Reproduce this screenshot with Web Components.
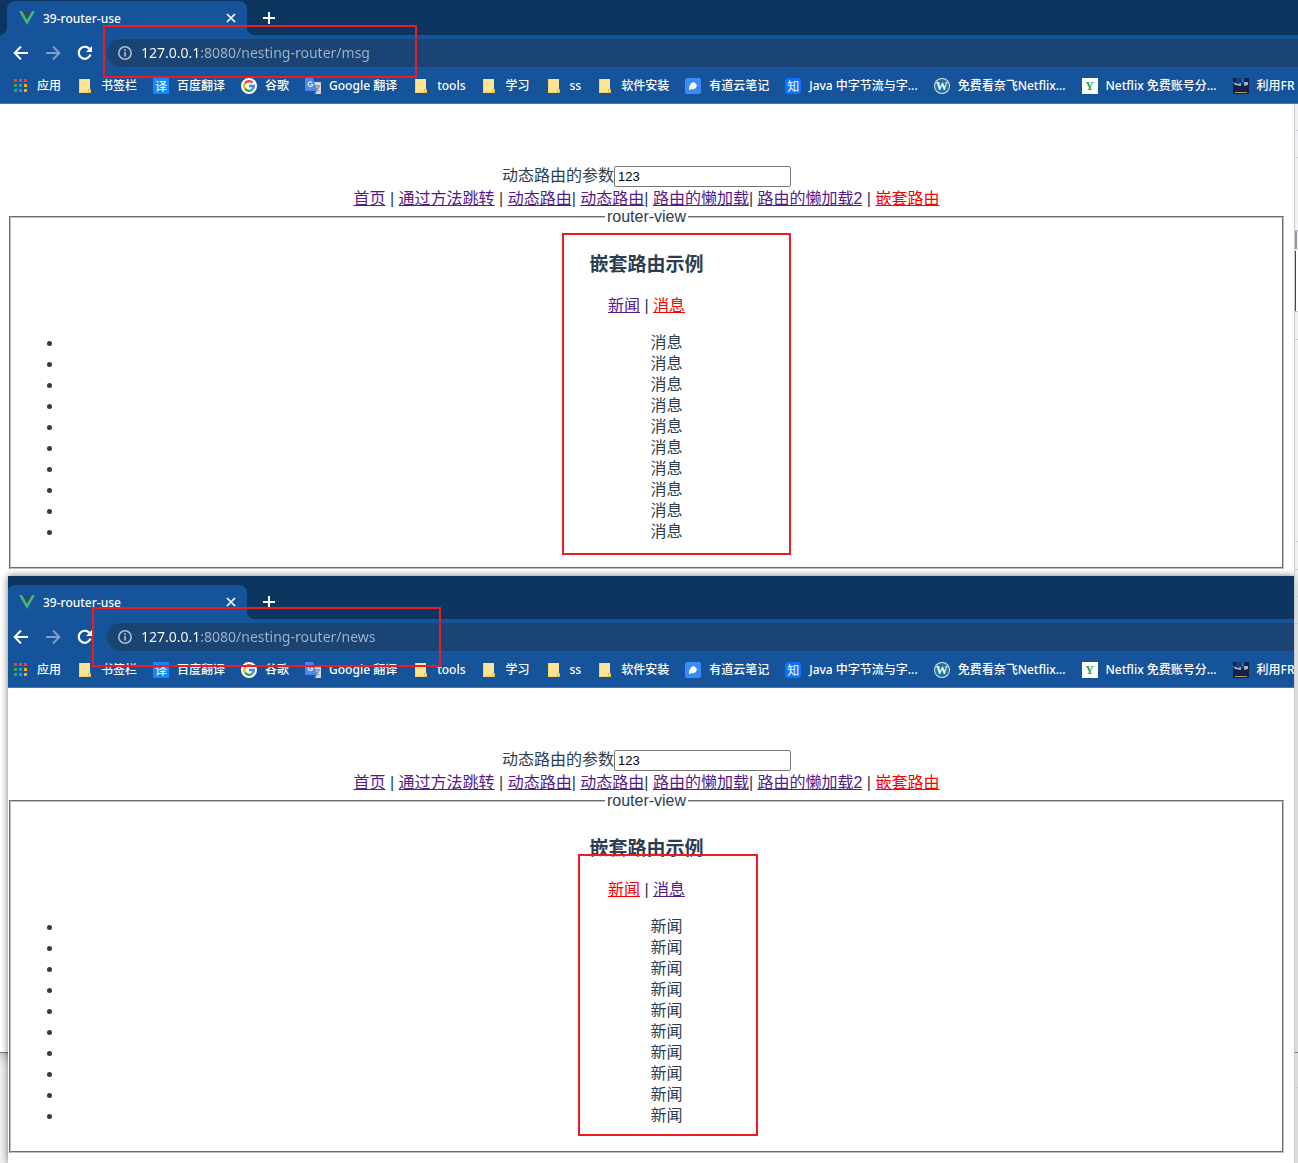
<!DOCTYPE html>
<html lang="zh-CN">
<head>
<meta charset="utf-8">
<title>39-router-use</title>
<style>
  html, body { margin: 0; height: 100%; }
  body { font-family: "Liberation Sans", "Noto Sans CJK SC", sans-serif; overflow: hidden; }
</style>
</head>
<body>
<desk-top>
  <browser-window class="back" url="127.0.0.1:8080/nesting-router/msg">
    <router-page active="消息" name="msg"></router-page>
  </browser-window>
  <browser-window class="front" url="127.0.0.1:8080/nesting-router/news">
    <router-page active="新闻" name="news"></router-page>
  </browser-window>
  <red-frame style="left:103px;top:25px;width:314px;height:53px"></red-frame>
  <red-frame style="left:562px;top:233px;width:229px;height:322px"></red-frame>
  <red-frame style="left:92px;top:607px;width:349px;height:60px"></red-frame>
  <red-frame style="left:578px;top:854px;width:180px;height:282px"></red-frame>
</desk-top>

<script>
const define = (name, html, setup) => {
  const template = document.createElement('template');
  template.innerHTML = html;
  customElements.define(name, class extends HTMLElement {
    constructor() {
      super();
      this.attachShadow({ mode: 'open' }).append(template.content.cloneNode(true));
    }
    connectedCallback() { if (setup) setup(this, this.shadowRoot); }
  });
};

/* Bookmark icons */
const icons = {
  apps: `<svg width="16" height="16"><g fill="#ea4335"><path d="M1 1h3v3H1zM6 1h3v3H6zM11 1h3v3h-3z"/></g><g fill="#34a853"><path d="M1 6h3v3H1zM1 11h3v3H1z"/></g><g fill="#2196f3"><path d="M6 6h3v3H6zM6 11h3v3H6z"/></g><g fill="#fbab09"><path d="M11 6h3v3h-3zM11 11h3v3h-3z"/></g></svg>`,
  folder: `<svg width="16" height="16"><path d="M2 1h11v10h1v4H2z" fill="#fee492"/><path d="M11 11h3v4h-3z" fill="#e9bf44"/><path d="M12 12h1v2h-1z" fill="#fee492"/><path d="M2.500 1v13.500h9" fill="none" stroke="#f3d06a"/></svg>`,
  yi: `<span class="tile" style="background:#1687fb">译</span>`,
  zhi: `<span class="tile" style="background:#0b74fb;border-radius:3px">知</span>`,
  y: `<span class="tile serif" style="background:#fff;color:#22a55b">Y</span>`,
  wp: `<span class="tile serif" style="background:#21759b;border-radius:50%;box-shadow:inset 0 0 0 1px #d9e6ee">W</span>`,
  google: `<svg width="16" height="16"><circle cx="8" cy="8" r="8" fill="#fff"/><g fill="none" stroke-width="2.400"><path d="M4 5.300A4.800 4.800 0 0 1 11.500 4.600" stroke="#ea4335"/><path d="M4 10.700A4.800 4.800 0 0 1 4 5.300" stroke="#fbbc05"/><path d="M11.300 11.500A4.800 4.800 0 0 1 4 10.700" stroke="#34a853"/><path d="M8 8h4.800A4.800 4.800 0 0 1 11.300 11.500" stroke="#4285f4"/></g></svg>`,
  translate: `<svg width="16" height="16"><path d="M7 4h8a1 1 0 0 1 1 1v10a1 1 0 0 1-1 1h-5z" fill="#d5d8dc"/><path d="M9 8h6M12 7v1M14 8c-1 3-2 4-4 5M10.500 9l3.500 4" fill="none" stroke="#6f7f8c"/><path d="M1 0h7l4 13H1a1 1 0 0 1-1-1V1a1 1 0 0 1 1-1z" fill="#4e86ec"/><path d="M8.500 13H12l-2 3z" fill="#3060c0"/><path d="M7 4.500a2.300 2.300 0 1 0 .700 2H5.500" fill="none" stroke="#e8f0ff" stroke-width="1.200"/></svg>`,
  note: `<svg width="16" height="16"><rect width="16" height="16" rx="2" fill="#398bfb"/><path d="M4 12c0-4 1-7 5-8l3 3c-1 4-3 5-6 4l-1 1z" fill="#fff"/></svg>`,
  photo: `<svg width="16" height="16"><rect width="16" height="16" fill="#17203f"/><path d="M3 0h9v5l-4 2-5-2z" fill="#173e7c"/><path d="M0 4l5 2 3-1v3L2 7zM11 4h4v3l-4 1z" fill="#9db4cc"/><path d="M0 9h16v4H0z" fill="#192242"/><path d="M2 14h12v1H2z" fill="#b39a6b"/><path d="M9 1h1v3H9z" fill="#3695d2"/></svg>`
};

define('book-mark', `
<style>
  :host { display: block; flex: none; }
  a { display: flex; align-items: center; gap: 8px; height: 16px; color: #fff; text-decoration: none; white-space: nowrap; }
  #icon { display: flex; width: 16px; height: 16px; }
  .tile { width: 16px; height: 16px; font: 12px/16px "Noto Sans CJK SC", sans-serif; text-align: center; overflow: hidden; }
  .serif { font: bold 12px/16px "Liberation Serif", serif; }
</style>
<a href="#"><span id="icon"></span><slot></slot></a>`,
(el, root) => { root.getElementById('icon').innerHTML = icons[el.getAttribute('icon')]; });

define('browser-tab', `
<style>
  :host { display: flex; align-items: center; position: relative; box-sizing: border-box; width: 240px; height: 34px; padding: 0 8px 0 12px; gap: 8px; border-radius: 8px 8px 0 0; background: #15539a; }
  :host::before, :host::after { content: ""; position: absolute; bottom: 0; width: 8px; height: 8px; }
  :host::before { right: 100%; background: radial-gradient(circle at 0 0, transparent 8px, #15539a 8px); }
  :host::after { left: 100%; background: radial-gradient(circle at 100% 0, transparent 8px, #15539a 8px); }
  span { flex: 1; padding-top: 2px; }
  button { display: flex; padding: 0; border: 0; background: none; }
</style>
<svg width="16" height="16"><path d="M0 1h3.200L8 9.500 12.800 1H16L8 15z" fill="#41b883"/><path d="M3.200 1h3L8 4.200 9.800 1h3L8 9.500z" fill="#35495e"/></svg>
<span><slot></slot></span>
<button aria-label="关闭"><svg width="16" height="16"><path d="M4 4l8 8M12 4l-8 8" stroke="#fff" stroke-width="1.700"/></svg></button>`);

define('browser-window', `
<style>
  :host { display: block; overflow: hidden; background: #fff; }
  .chrome { font: 500 12px/16px "Noto Sans", "Noto Sans CJK SC", sans-serif; color: #fff; background: #15539a; border-bottom: 1px solid #4478b4; }
  .strip { display: flex; align-items: flex-end; height: var(--strip, 35px); padding-left: 7px; background: #0c3660; }
  button { display: flex; padding: 0; border: 0; background: none; }
  .add { margin: 0 0 9px 14px; }
  .bar { display: flex; align-items: center; height: 36px; padding-left: 13px; gap: 16px; }
  .pill { display: flex; align-items: center; gap: 8px; flex: 1; height: 28px; margin-left: -2px; padding-left: 10px; border-radius: 14px 0 0 14px; background: #194473; }
  input { flex: 1; min-width: 0; padding: 0; border: 0; outline: 0; font: 14px/20px "Noto Sans", sans-serif; color: transparent; background: linear-gradient(90deg, #fff 60px, #a3b4c7 60px) text; -webkit-background-clip: text; }
  .marks { display: flex; align-items: center; gap: 16px; height: 32px; padding-left: 13px; box-sizing: border-box; padding-bottom: 2px; overflow: hidden; }
  .inner { margin-left: var(--shift, 0); }
</style>
<div class="inner">
  <div class="chrome">
    <div class="strip">
      <browser-tab>39-router-use</browser-tab>
      <button class="add" aria-label="新标签页"><svg width="16" height="16"><path d="M8 2v12M2 8h12" stroke="#fff" stroke-width="2"/></svg></button>
    </div>
    <div class="bar">
      <button aria-label="后退"><svg width="16" height="16"><path d="M15 8H2M8 1.500L1.700 8 8 14.500" fill="none" stroke="#fff" stroke-width="2"/></svg></button>
      <button aria-label="前进"><svg width="16" height="16"><path d="M1 8h13M8 1.500L14.300 8 8 14.500" fill="none" stroke="#7f9fc6" stroke-width="2"/></svg></button>
      <button aria-label="刷新"><svg width="16" height="16"><path d="M13.500 9.500A6 6 0 1 1 12.300 3.800" fill="none" stroke="#fff" stroke-width="2.200"/><path d="M15 1v6H9z" fill="#fff"/></svg></button>
      <div class="pill">
        <svg width="16" height="16"><circle cx="8" cy="8" r="6.200" fill="none" stroke="#b3c0cf" stroke-width="1.500"/><path d="M8 7v4.500M8 4.300v1.700" stroke="#b3c0cf" stroke-width="1.600"/></svg>
        <input aria-label="地址">
      </div>
    </div>
    <nav class="marks">
      <book-mark icon="apps">应用</book-mark>
      <book-mark icon="folder">书签栏</book-mark>
      <book-mark icon="yi">百度翻译</book-mark>
      <book-mark icon="google">谷歌</book-mark>
      <book-mark icon="translate">Google 翻译</book-mark>
      <book-mark icon="folder">tools</book-mark>
      <book-mark icon="folder">学习</book-mark>
      <book-mark icon="folder">ss</book-mark>
      <book-mark icon="folder">软件安装</book-mark>
      <book-mark icon="note">有道云笔记</book-mark>
      <book-mark icon="zhi">Java 中字节流与字...</book-mark>
      <book-mark icon="wp">免费看奈飞Netflix...</book-mark>
      <book-mark icon="y">Netflix 免费账号分...</book-mark>
      <book-mark icon="photo">利用FR</book-mark>
    </nav>
  </div>
  <slot></slot>
</div>`,
(el, root) => { root.querySelector('input').value = el.getAttribute('url'); });

define('router-page', `
<style>
  :host { display: block; padding: 60px var(--right, 14px) 7px 9px; color: #2c3e50; font: 16px/20px "Liberation Sans", "Noto Sans CJK SC", sans-serif; text-align: center; }
  .param { display: flex; justify-content: center; align-items: center; height: 24px; }
  input { box-sizing: border-box; width: 177px; height: 21px; padding: 0 3px; border: 1px solid #767676; border-radius: 2px; font: 13px "Liberation Sans", sans-serif; color: #000; }
  a { color: #551a8b; text-decoration: underline; }
  a.on { color: #f00; }
  .main { padding-top: 1px; }
  fieldset { margin: -1px 0 0; padding: 6px 12px 9px; border: 2px groove #c0c0c0; min-width: 0; }
  legend { padding: 0 2px; margin: 0 auto; line-height: 18px; }
  h3 { margin: 20px 0 18px; font-size: 19px; line-height: 25px; }
  .sub { line-height: 21px; }
  ul { margin: 16px 0; padding-left: 40px; line-height: 21px; }
</style>
<div class="param"><label for="param">动态路由的参数</label><input id="param" value="123"></div>
<nav class="main"><a href="#">首页</a> | <a href="#">通过方法跳转</a> | <a href="#">动态路由</a>| <a href="#">动态路由</a>| <a href="#">路由的懒加载</a>| <a href="#">路由的懒加载2</a> | <a href="#" class="on">嵌套路由</a></nav>
<fieldset>
  <legend>router-view</legend>
  <h3>嵌套路由示例</h3>
  <nav class="sub"><a href="#">新闻</a> | <a href="#">消息</a></nav>
  <ul></ul>
</fieldset>`,
(el, root) => {
  const active = el.getAttribute('active');
  root.querySelectorAll('.sub a').forEach(a => a.classList.toggle('on', a.textContent === active));
  root.querySelector('ul').innerHTML = `<li>${active}</li>`.repeat(10);
});

define('red-frame', `
<style>:host { position: absolute; box-sizing: border-box; border: 2px solid #ed1c24; pointer-events: none; }</style>`);

define('desk-top', `
<style>
  :host { display: block; position: relative; height: 100%; overflow: hidden; background: #f0f0f0; }
  ::slotted(.back) { position: absolute; inset: 0 0 110px 0; border-bottom: 1px solid #777; box-shadow: 0 2px 12px rgba(0,0,0,.4); }
  ::slotted(.front) { --strip: 43px; --shift: -8px; --right: 10px; position: absolute; inset: 576px 4px 0 8px; box-shadow: 0 0 7px rgba(0,0,0,.55); }
  .edge { position: absolute; top: 104px; right: 0; bottom: 0; width: 4px; box-sizing: border-box; border-left: 1px solid #c4cad0; background: linear-gradient(#eff1f3 466px, #dcdddf 480px); }
  .edge i { position: absolute; left: 0; right: 0; height: 1px; background: #c8cbd0; }
  .edge i.thumb { height: 18px; right: 1px; background: #999; }
  .edge i.red { height: 60px; background: linear-gradient(90deg, #a01c2c 1px, #fff 1px); }
</style>
<slot></slot>`,
(el, root) => {
  const edge = document.createElement('div');
  edge.className = 'edge';
  edge.innerHTML = [26, 53, 126, 207, 235, 437, 465, 492, 519, 983].map(y => `<i style="top:${y}px"></i>`).join('')
    + '<i class="thumb" style="top:127px"></i><i class="red" style="top:147px"></i><i style="top:948px;background:#777"></i>';
  root.append(edge);
});
</script>
</body>
</html>
